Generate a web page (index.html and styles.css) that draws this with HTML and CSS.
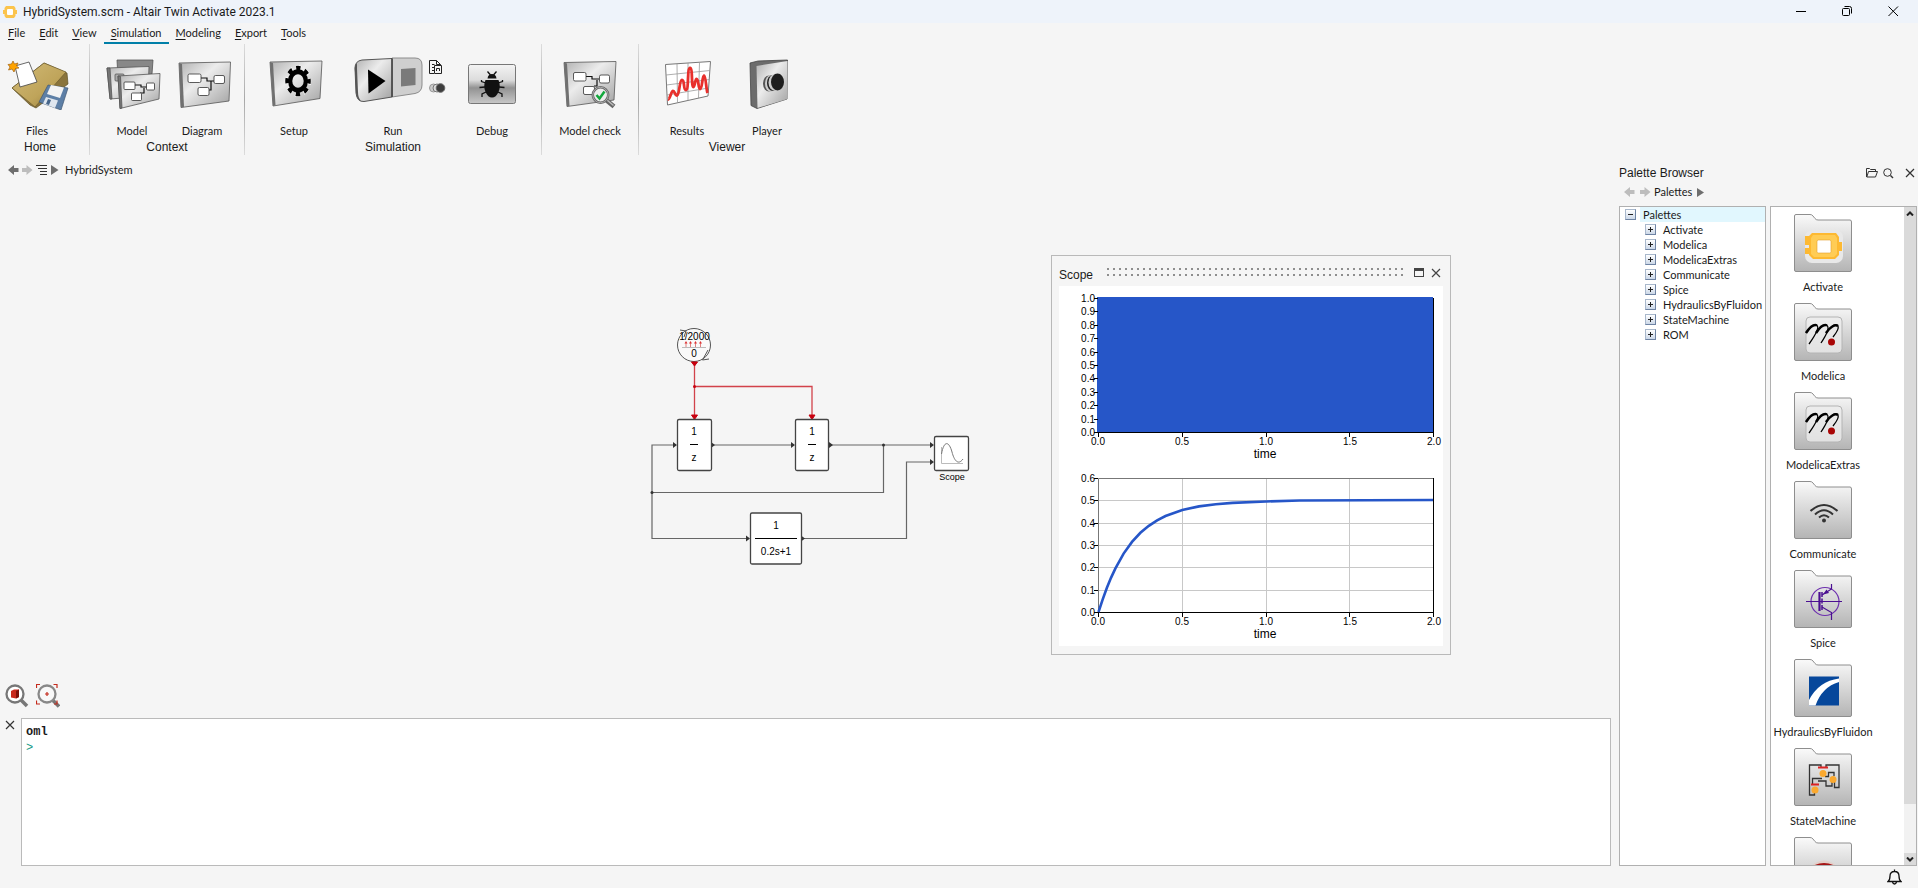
FILE: index.html
```html
<!DOCTYPE html>
<html lang="en">
<head>
    <meta charset="UTF-8">
    <meta name="viewport" content="width=device-width, initial-scale=1.0">
    <title>HybridSystem.scm - Altair Twin Activate 2023.1</title>
    <link rel="stylesheet" href="styles.css">
</head>
<body>
    <!-- shared gradients and shapes -->
    <svg class="defs" width="0" height="0" aria-hidden="true">
        <defs>
            <linearGradient id="metal" x1="0" y1="0" x2="1" y2="1">
                <stop offset="0" stop-color="#b0b0b0"/>
                <stop offset="0.4" stop-color="#ececec"/>
                <stop offset="1" stop-color="#a0a0a0"/>
            </linearGradient>
            <linearGradient id="metal-down" x1="0" y1="0" x2="0" y2="1">
                <stop offset="0" stop-color="#f4f4f4"/>
                <stop offset="0.4" stop-color="#dcdcdc"/>
                <stop offset="0.6" stop-color="#929292"/>
                <stop offset="1" stop-color="#c8c8c8"/>
            </linearGradient>
            <linearGradient id="folder-fill" x1="0" y1="0" x2="0" y2="1">
                <stop offset="0" stop-color="#fafafa"/>
                <stop offset="1" stop-color="#b4b4b4"/>
            </linearGradient>
            <linearGradient id="gold" x1="0" y1="0" x2="1" y2="1">
                <stop offset="0" stop-color="#d2bb78"/>
                <stop offset="0.6" stop-color="#bfa45a"/>
                <stop offset="1" stop-color="#8c7638"/>
            </linearGradient>
            <symbol id="folder" viewBox="0 0 58 58">
                <path d="M.5 56V2Q.5 .5 2 .5H16Q18 .5 19 2L21 4.500Q22 6 24 6H56Q57.500 6 57.500 8V56Q57.500 57.500 56 57.500H2Q.5 57.500 .5 56Z" fill="url(#folder-fill)" stroke="#8e8e8e"/>
            </symbol>
            <symbol id="modelica" viewBox="0 0 58 58">
                <rect x="12" y="14" width="36" height="36" rx="4" fill="#eee" fill-opacity=".75" stroke="#b4b4b4"/>
                <path d="M12 30C16 24 20 21 23 22.500C26 25 20 34 15 41M22 30C26 24 30 21 33 22.500C36 25 31 34 27 40M32 30C36 24 40 21 43 22C46 24 43 29 39 34" fill="none" stroke="#000" stroke-width="1.300"/>
                <path d="M12 30C16 24 20 21 23 22.500M22 30C26 24 30 21 33 22.500M32 30C36 24 41 21 44 23" fill="none" stroke="#000" stroke-width="2.500"/>
                <circle cx="37.500" cy="39" r="3.500" fill="#a80505"/>
            </symbol>
        </defs>
    </svg>

    <header class="titlebar">
        <svg width="14" height="14" viewBox="0 0 14 14" aria-hidden="true">
            <path d="M3 1H11L12.500 3V5H14V9H12.500V11L11 13H3L1.500 11V9H0V5H1.500V3Z" fill="#fbc44d"/>
            <rect x="4" y="4" width="6" height="6" rx="1" fill="#fff"/>
        </svg>
        <span class="titlebar-text">HybridSystem.scm - Altair Twin Activate 2023.1</span>
        <button class="window-btn" aria-label="Minimize"><svg width="11" height="11" viewBox="0 0 11 11"><path d="M0 5.500H10" stroke="#000"/></svg></button>
        <button class="window-btn" aria-label="Restore"><svg width="11" height="11" viewBox="0 0 11 11" fill="none" stroke="#000"><rect x=".5" y="2.500" width="7" height="7" rx="1"/><path d="M2.500 .5H7.500Q9.500 .5 9.500 2.500V7.500"/></svg></button>
        <button class="window-btn" aria-label="Close"><svg width="11" height="11" viewBox="0 0 11 11"><path d="M.5 .5L10 10M10 .5L.5 10" stroke="#000"/></svg></button>
    </header>

    <nav class="menu">
        <a href="#"><u>F</u>ile</a>
        <a href="#"><u>E</u>dit</a>
        <a href="#"><u>V</u>iew</a>
        <a href="#" class="active"><u>S</u>imulation</a>
        <a href="#"><u>M</u>odeling</a>
        <a href="#"><u>E</u>xport</a>
        <a href="#"><u>T</u>ools</a>
    </nav>

    <div class="ribbon">
        <section class="group group-home">
            <div class="tools">
                <button class="tool">
                    <svg width="74" height="56" viewBox="0 0 74 56">
                        <path d="M44 9L67 19L68 30L52 42L36 54L30 51L12 34Z" fill="#8a743c" stroke="#5f5128" stroke-width=".7"/>
                        <path d="M44 9L66 18L35 53L12 34Z" fill="url(#gold)" stroke="#6d5c2c" stroke-width=".7"/>
                        <path d="M48 31L68 34L61 56L39 48Z" fill="#5d7fa6" stroke="#3f5873" stroke-width=".7"/>
                        <path d="M51 31L64 33.500L60 44L47 40Z" fill="#f3f3f3"/>
                        <path d="M46 43L58 46.500L55 54L43 49.500Z" fill="#dfe6ee"/>
                        <path d="M48 45L51 46L49 51L46 50Z" fill="#46658a"/>
                        <path d="M15 12L29 8L37 28L20 33Z" fill="#fff" stroke="#444" stroke-width=".8"/>
                        <path d="M13 7L14.500 10L18 9L16.500 12L19 14L15.500 14.500L14 18L12 15L8.500 16L10 13L8 10.500L11.500 10Z" fill="#ffa300" stroke="#a06010" stroke-width=".7"/>
                    </svg>
                    <span>Files</span>
                </button>
            </div>
            <h2>Home</h2>
        </section>

        <section class="group group-context">
            <div class="tools">
                <button class="tool">
                    <svg width="64" height="56" viewBox="0 0 64 56">
                        <g stroke="#555" stroke-width=".8">
                            <path d="M17 6H53L52 20L18 24Z" fill="#888"/>
                            <path d="M7 14L49 12.500L48 42L10 45Z" fill="url(#metal)"/>
                            <path d="M7 14L10 14L12 45H10Z" fill="#777"/>
                            <rect x="15" y="20" width="9" height="7" rx="1" fill="#aaa"/>
                            <path d="M18 22L60 19.500L59 45L20 54.500Z" fill="url(#metal)"/>
                            <path d="M18 22L20.500 22.500L22 54L20 54.500Z" fill="#777"/>
                        </g>
                        <path d="M34 31H41V33H47M44 34V39H40" fill="none" stroke="#111" stroke-width="1.200"/>
                        <g fill="#fff" stroke="#333" stroke-width=".8">
                            <rect x="24" y="28" width="11" height="7.500" rx="1"/>
                            <rect x="46.500" y="29" width="8" height="7" rx="1"/>
                            <rect x="31.500" y="39" width="10" height="7.500" rx="1"/>
                        </g>
                    </svg>
                    <span>Model</span>
                </button>
                <button class="tool">
                    <svg width="64" height="56" viewBox="0 0 64 56">
                        <path d="M9 9L60.500 8L59 47L11 53.500Z" fill="url(#metal)" stroke="#555" stroke-width=".8"/>
                        <path d="M9 9L12 10L14 53L11 53.500Z" fill="#707070"/>
                        <path d="M30 24H37V27H44M41 27V36H38" fill="none" stroke="#111" stroke-width="1.200"/>
                        <g fill="#fff" stroke="#333" stroke-width=".8">
                            <rect x="18" y="20" width="13" height="8.500" rx="1.500"/>
                            <rect x="44" y="21.500" width="10.500" height="8" rx="1.500"/>
                            <rect x="28" y="33.500" width="11" height="8" rx="1.500"/>
                        </g>
                    </svg>
                    <span>Diagram</span>
                </button>
            </div>
            <h2>Context</h2>
        </section>

        <section class="group group-simulation">
            <div class="tools">
                <button class="tool">
                    <svg width="64" height="56" viewBox="0 0 64 56">
                        <path d="M8 8L60 7L58 44.500L11 52Z" fill="url(#metal)" stroke="#555" stroke-width=".8"/>
                        <path d="M8 8L11 9L13.500 51.500L11 52Z" fill="#707070"/>
                        <g transform="translate(36 27) scale(.84 1)" fill="none">
                            <circle r="13.200" stroke="#fff" stroke-width="5" stroke-dasharray="5.400 4.967" stroke-dashoffset="2"/>
                            <circle r="12.700" stroke="#000" stroke-width="5" stroke-dasharray="5 4.974" stroke-dashoffset="2.500"/>
                            <circle r="9.300" stroke="#000" stroke-width="5"/>
                        </g>
                    </svg>
                    <span>Setup</span>
                </button>
                <div class="tool tool-run">
                    <div class="run-row">
                        <button class="plain-btn" aria-label="Run simulation">
                            <svg width="72" height="56" viewBox="0 0 72 56">
                                <path d="M39 4H62Q69 4 69 11V31Q69 38 62 39.500L39 43Z" fill="#cfcfcf" stroke="#8c8c8c"/>
                                <path d="M39 4.500L9 6Q2 7 2 14L3 39Q4 48 11 47.500L39 43Z" fill="url(#metal)" stroke="#555"/>
                                <path d="M4 9Q1 12 2 18L3 39Q4 46 8 47Q5 44 5 38L4 15Z" fill="#555"/>
                                <path d="M39 4.500V43" stroke="#444" stroke-width="1.500"/>
                                <path d="M15 15.500L32.500 27L15.500 39.500Z" fill="#000"/>
                                <path d="M48 15L62.500 14V31L48 32.500Z" fill="#7a7a7a"/>
                            </svg>
                        </button>
                        <div class="run-side">
                            <button class="plain-btn" aria-label="Batch run">
                                <svg width="14" height="15" viewBox="0 0 14 15" fill="none" stroke="#222"><path d="M5 13.500H.5V.5H7.500L11.500 4.500V5M7.500 .5V4.500H11.500M3 4.500H5.500M3 7.500H5M3 10.500H5"/><path d="M5.500 5.500H12.500V13.500H5.500Z"/><path d="M7.500 11V8.500H10.500V11"/></svg>
                            </button>
                            <button class="plain-btn" aria-label="Record">
                                <svg width="17" height="10" viewBox="0 0 17 10"><circle cx="4.500" cy="5" r="4" fill="#ccc" stroke="#999"/><circle cx="8" cy="5" r="4" fill="#ddd" stroke="#777"/><circle cx="11.500" cy="5" r="4.300" fill="#3d3d3d" stroke="#666"/></svg>
                            </button>
                        </div>
                    </div>
                    <span>Run</span>
                </div>
                <button class="tool">
                    <svg width="64" height="56" viewBox="0 0 64 56">
                        <rect x="8.500" y="10.500" width="47" height="39" rx="2" fill="url(#metal-down)" stroke="#777"/>
                        <g fill="none" stroke="#111" stroke-width="1.300">
                            <path d="M30.500 21L27.500 17.500M33.500 21L36.500 17.500M26 29L21.500 27.500V26M25 33L19.500 33.500M26 38L22 40V43M38 29L42.500 27.500V26M39 33L44.500 33.500M38 38L42 40V43"/>
                        </g>
                        <path d="M27.500 24.500Q28 20 32 20Q36 20 36.500 24.500Z" fill="#111"/>
                        <path d="M25.500 26H38.500Q41 32 38.500 38Q36 43.500 32 43.500Q28 43.500 25.500 38Q23 32 25.500 26Z" fill="#111"/>
                    </svg>
                    <span>Debug</span>
                </button>
            </div>
            <h2>Simulation</h2>
        </section>

        <section class="group group-check">
            <div class="tools">
                <button class="tool">
                    <svg width="64" height="56" viewBox="0 0 64 56">
                        <path d="M6 8.500L58 7.500L56 46L9 52.500Z" fill="url(#metal)" stroke="#555" stroke-width=".8"/>
                        <path d="M6 8.500L9 9.500L11.500 52L9 52.500Z" fill="#707070"/>
                        <path d="M28 22.500H34V25H41M39 26V32H36" fill="none" stroke="#111" stroke-width="1.200"/>
                        <g fill="#fff" stroke="#333" stroke-width=".8">
                            <rect x="15.500" y="18.500" width="12.500" height="8.500" rx="1.500"/>
                            <rect x="41.500" y="21" width="10" height="8" rx="1.500"/>
                            <rect x="25.500" y="32.500" width="11" height="8" rx="1.500"/>
                        </g>
                        <path d="M48 46L56 52.500" stroke="#666" stroke-width="4.500"/>
                        <path d="M49 46L55.500 51.500" stroke="#bbb" stroke-width="1.500"/>
                        <circle cx="42.500" cy="41" r="7.700" fill="#ececec" stroke="#666" stroke-width="2.500"/>
                        <circle cx="42.500" cy="41" r="7.700" fill="none" stroke="#bbb" stroke-width=".8"/>
                        <path d="M38.500 41L41.500 44.500L46.500 37.500" fill="none" stroke="#12a83c" stroke-width="2.500"/>
                    </svg>
                    <span>Model check</span>
                </button>
            </div>
        </section>

        <section class="group group-viewer">
            <div class="tools">
                <button class="tool">
                    <svg width="64" height="56" viewBox="0 0 64 56">
                        <path d="M10.500 10.500L55.500 7.500L53 42L12.500 51Z" fill="#fff" stroke="#777"/>
                        <path d="M11 21L55 16.500M11.500 31L54.500 25.500M12 41L53.500 34M22 10L22.500 49M33 9L33 46.500M44.500 8.500L43.500 44" stroke="#999" stroke-width=".8"/>
                        <path d="M13 45.500C15 46 16 37 18 37C20 37 20 42 22 41.500C25 40 24 26 27 26C30 26 28 36 31 36C34 36 32 14 35 14C38 14 36 33 38.500 33C40 33 40 25 41.500 25C44 25 43 35 45 35C47.500 35 47 22 49 21.500C51 22 51 35 52.500 39" fill="none" stroke="#e8302c" stroke-width="2.800"/>
                    </svg>
                    <span>Results</span>
                </button>
                <button class="tool">
                    <svg width="64" height="56" viewBox="0 0 64 56">
                        <path d="M15 9L23 7L52.500 6L52 45L22 54.500L16 51.500Z" fill="#6c6c6c" stroke="#444" stroke-width=".8"/>
                        <path d="M21.500 12L52.500 7V45L22.500 54Z" fill="url(#metal)"/>
                        <ellipse cx="34" cy="29.500" rx="6" ry="8" fill="#555"/>
                        <ellipse cx="36" cy="29.500" rx="6" ry="8.500" fill="#ccc"/>
                        <ellipse cx="38" cy="29" rx="6" ry="8" fill="#222"/>
                        <ellipse cx="40" cy="28.500" rx="6.500" ry="8.500" fill="#ccc"/>
                        <ellipse cx="42.500" cy="28" rx="6.500" ry="8.500" fill="#1e1e1e"/>
                    </svg>
                    <span>Player</span>
                </button>
            </div>
            <h2>Viewer</h2>
        </section>
    </div>

    <main class="workspace">
        <div class="editor">
            <div class="breadcrumb">
                <button class="plain-btn" aria-label="Back"><svg width="11" height="10" viewBox="0 0 11 10"><path d="M0 5L6 0V3H10.500V7H6V10Z" fill="#6e6e6e"/></svg></button>
                <button class="plain-btn" aria-label="Forward"><svg width="11" height="10" viewBox="0 0 11 10"><path d="M10.500 5L4.500 0V3H0V7H4.500V10Z" fill="#bdbdbd"/></svg></button>
                <button class="plain-btn" aria-label="Outline"><svg width="12" height="11" viewBox="0 0 12 11"><path d="M0 .5H11M2 3.500H11M4 6.500H11M4 9.500H11" stroke="#333" stroke-width="1.200"/></svg></button>
                <svg width="8" height="10" viewBox="0 0 8 10" aria-hidden="true"><path d="M0 0L7.500 5L0 10Z" fill="#6e6e6e"/></svg>
                <a href="#">HybridSystem</a>
            </div>

            <div class="canvas">
                <svg class="diagram" width="340" height="270" viewBox="0 0 340 270">
                    <!-- event clock -->
                    <circle cx="54" cy="35" r="16.500" fill="#fafafa" stroke="#555"/>
                    <path d="M40 20L46 21L44 27M68 40L62.500 50L69 49" fill="none" stroke="#555"/>
                    <path d="M42 37.500H66" stroke="#bbb"/>
                    <path d="M46 37V33M50.500 37V33M55.500 37V33M60.500 37V33" stroke="#e08080"/>
                    <path d="M44.500 33.500L46 31L47.500 33.500ZM49 33.500L50.500 31L52 33.500ZM54 33.500L55.500 31L57 33.500ZM59 33.500L60.500 31L62 33.500Z" fill="#d33"/>
                    <text x="54.500" y="30">1/2000</text>
                    <text x="54" y="47">0</text>

                    <!-- event links -->
                    <path d="M54.500 53V106M54.500 76.500H172V106" fill="none" stroke="#d2424a" stroke-width="1.300"/>
                    <path d="M51.500 52H57.500L54.500 56ZM51.500 105H57.500L54.500 109.500ZM169 105H175L172 109.500Z" fill="#c8000f" stroke="#c8000f"/>
                    <circle cx="54.500" cy="76.500" r="1.500" fill="#c8000f"/>

                    <!-- signal links -->
                    <g fill="none" stroke="#666" stroke-width="1.200">
                        <path d="M36 135H12V228.500H108"/>
                        <path d="M72 135H153"/>
                        <path d="M190 135H292"/>
                        <path d="M243.500 135V182.500H12"/>
                        <path d="M162 228.500H266.500V152H292"/>
                    </g>
                    <g fill="#333">
                        <path d="M33 132V138L37 135ZM151 132V138L155 135ZM290 132V138L294 135ZM290 149V155L294 152ZM106 225.500V231.500L110 228.500Z"/>
                        <path d="M71 132L75 135L71 138ZM189 132L193 135L189 138ZM161 225.500L165 228.500L161 231.500Z"/>
                        <circle cx="12" cy="182.500" r="1.500"/>
                        <circle cx="243.500" cy="135" r="1.500"/>
                    </g>

                    <!-- blocks -->
                    <g fill="#fff" stroke="#444" stroke-width="1.300">
                        <rect x="37.500" y="109.500" width="34" height="51" rx="1.500"/>
                        <rect x="155.500" y="109.500" width="33" height="51" rx="1.500"/>
                        <rect x="110.500" y="203" width="51" height="51" rx="1.500"/>
                        <rect x="294.500" y="126.500" width="34" height="34" rx="1.500"/>
                    </g>
                    <path d="M50 134.500H58M168 134.500H176M115 228.500H157" stroke="#000"/>
                    <text x="54" y="125">1</text>
                    <text x="54" y="151">z</text>
                    <text x="172" y="125">1</text>
                    <text x="172" y="151">z</text>
                    <text x="136" y="219">1</text>
                    <text x="136" y="245">0.2s+1</text>
                    <path d="M301.500 137V153.500H323" fill="none" stroke="#bbb"/>
                    <path d="M301.500 144C304 130 309 131 312 142C314 150 318 156 323 149" fill="none" stroke="#777"/>
                    <text x="312" y="170" class="block-name">Scope</text>
                </svg>

                <section class="scope">
                    <header class="scope-header">
                        <h3>Scope</h3>
                        <div class="grip"></div>
                        <button class="plain-btn" aria-label="Maximize scope"><svg width="10" height="10" viewBox="0 0 10 10"><rect x=".5" y=".5" width="9" height="8" fill="none" stroke="#444"/><path d="M0 1.500H10" stroke="#444" stroke-width="3"/></svg></button>
                        <button class="plain-btn" aria-label="Close scope"><svg width="10" height="10" viewBox="0 0 10 10"><path d="M1 1L9 9M9 1L1 9" stroke="#444" stroke-width="1.200"/></svg></button>
                    </header>
                    <svg class="plots" width="384" height="360" viewBox="0 0 384 360">
                        <!-- upper plot -->
                        <path d="M374.500 12V147" stroke="#000"/>
                        <rect x="38" y="11" width="336" height="135" fill="#2656c8"/>
                        <path d="M35 146.500H375M39.500 146V151M123.500 146V151M207.500 146V151M290.500 146V151M374.500 146V151M35 12.500H39M35 25.500H39M35 39.500H39M35 52.500H39M35 66.500H39M35 79.500H39M35 92.500H39M35 106.500H39M35 119.500H39M35 133.500H39" stroke="#000"/>
                        <g class="ticks-y">
                            <text x="36" y="16">1.0</text>
                            <text x="36" y="29">0.9</text>
                            <text x="36" y="43">0.8</text>
                            <text x="36" y="56">0.7</text>
                            <text x="36" y="70">0.6</text>
                            <text x="36" y="83">0.5</text>
                            <text x="36" y="96">0.4</text>
                            <text x="36" y="110">0.3</text>
                            <text x="36" y="123">0.2</text>
                            <text x="36" y="137">0.1</text>
                            <text x="36" y="150">0.0</text>
                        </g>
                        <g class="ticks-x">
                            <text x="39" y="159">0.0</text>
                            <text x="123" y="159">0.5</text>
                            <text x="207" y="159">1.0</text>
                            <text x="291" y="159">1.5</text>
                            <text x="375" y="159">2.0</text>
                        </g>
                        <text x="206" y="172" class="axis-name">time</text>

                        <!-- lower plot -->
                        <path d="M123.500 193V326M207.500 193V326M290.500 193V326M40 214.500H374M40 237.500H374M40 259.500H374M40 281.500H374M40 304.500H374" stroke="#c8c8c8"/>
                        <path d="M39.500 326V192.500H374" fill="none" stroke="#777"/>
                        <path d="M374.500 192V327M35 326.500H375M39.500 326V331M123.500 326V331M207.500 326V331M290.500 326V331M374.500 326V331M35 192.500H39M35 214.500H39M35 237.500H39M35 259.500H39M35 281.500H39M35 304.500H39" stroke="#000"/>
                        <polyline points="39.5,326 43.7,313.4 47.9,301.8 52.1,291.6 56.3,282.6 64.6,267.6 73,255.9 81.4,246.8 89.8,239.8 98.1,234.3 106.5,230 123.3,224 140,220.4 156.8,218.2 173.5,216.9 207,215.5 240.5,214.5 374,214" fill="none" stroke="#2656c8" stroke-width="2.600"/>
                        <g class="ticks-y">
                            <text x="36" y="196">0.6</text>
                            <text x="36" y="218">0.5</text>
                            <text x="36" y="241">0.4</text>
                            <text x="36" y="263">0.3</text>
                            <text x="36" y="285">0.2</text>
                            <text x="36" y="308">0.1</text>
                            <text x="36" y="330">0.0</text>
                        </g>
                        <g class="ticks-x">
                            <text x="39" y="339">0.0</text>
                            <text x="123" y="339">0.5</text>
                            <text x="207" y="339">1.0</text>
                            <text x="291" y="339">1.5</text>
                            <text x="375" y="339">2.0</text>
                        </g>
                        <text x="206" y="352" class="axis-name">time</text>
                    </svg>
                </section>
            </div>

            <div class="zoom-tools">
                <button class="plain-btn" aria-label="Zoom to object">
                    <svg width="24" height="24" viewBox="0 0 24 24"><path d="M16 16L22 22" stroke="#777" stroke-width="3.500"/><circle cx="10" cy="10" r="8.500" fill="#fff" stroke="#777" stroke-width="2.300"/><path d="M6 7L9 5.500H14V13L11 14.500L6 13.500Z" fill="#c8291c"/><path d="M11 7L14 5.500V13L11 14.500Z" fill="#7c0f08"/></svg>
                </button>
                <button class="plain-btn" aria-label="Zoom to fit">
                    <svg width="24" height="24" viewBox="0 0 24 24"><path d="M16.500 16L23 22.500" stroke="#777" stroke-width="3.500"/><circle cx="11" cy="10" r="8.500" fill="#f8f8f8" stroke="#888" stroke-width="2.300"/><path d="M.5 4V.5H4M17.500 .5H21V4M.5 16.500V20H4M21 16.500V20H18M9 10H13M11 8V12" fill="none" stroke="#c42a1c" stroke-width="1.200"/></svg>
                </button>
            </div>

            <div class="console">
                <button class="plain-btn console-close" aria-label="Close console"><svg width="10" height="10" viewBox="0 0 10 10"><path d="M1 1L9 9M9 1L1 9" stroke="#333" stroke-width="1.200"/></svg></button>
                <div class="console-box">
                    <div class="console-lang">oml</div>
                    <div class="console-prompt">&gt;</div>
                </div>
            </div>
        </div>

        <aside class="palette">
            <header class="palette-header">
                <h3>Palette Browser</h3>
                <button class="plain-btn" aria-label="Open folder"><svg width="12" height="10" viewBox="0 0 12 10" fill="none" stroke="#333"><path d="M.5 9V.5H3.500L4.500 1.500H9.500V3.500M.8 9L2.500 3.500H11.500L9.500 9Z"/></svg></button>
                <button class="plain-btn" aria-label="Search"><svg width="11" height="11" viewBox="0 0 11 11" fill="none" stroke="#333"><circle cx="4.500" cy="4.500" r="3.800"/><path d="M7.500 7.500L10 10" stroke-width="1.400"/></svg></button>
                <button class="plain-btn palette-close" aria-label="Close palette"><svg width="10" height="10" viewBox="0 0 10 10"><path d="M1 1L9 9M9 1L1 9" stroke="#333" stroke-width="1.200"/></svg></button>
            </header>
            <div class="palette-nav">
                <button class="plain-btn" aria-label="Back"><svg width="11" height="10" viewBox="0 0 11 10"><path d="M0 5L6 0V3H10.500V7H6V10Z" fill="#bdbdbd"/></svg></button>
                <button class="plain-btn" aria-label="Forward"><svg width="11" height="10" viewBox="0 0 11 10"><path d="M10.500 5L4.500 0V3H0V7H4.500V10Z" fill="#bdbdbd"/></svg></button>
                <a href="#">Palettes</a>
                <svg width="7" height="9" viewBox="0 0 7 9" aria-hidden="true"><path d="M0 0L7 4.500L0 9Z" fill="#6e6e6e"/></svg>
            </div>

            <div class="palette-body">
                <ul class="tree">
                    <li class="root"><button class="toggle minus" aria-label="Collapse"></button><span>Palettes</span></li>
                    <li><button class="toggle" aria-label="Expand"></button><span>Activate</span></li>
                    <li><button class="toggle" aria-label="Expand"></button><span>Modelica</span></li>
                    <li><button class="toggle" aria-label="Expand"></button><span>ModelicaExtras</span></li>
                    <li><button class="toggle" aria-label="Expand"></button><span>Communicate</span></li>
                    <li><button class="toggle" aria-label="Expand"></button><span>Spice</span></li>
                    <li><button class="toggle" aria-label="Expand"></button><span>HydraulicsByFluidon</span></li>
                    <li><button class="toggle" aria-label="Expand"></button><span>StateMachine</span></li>
                    <li><button class="toggle" aria-label="Expand"></button><span>ROM</span></li>
                </ul>

                <div class="library">
                    <div class="library-items">
                        <button class="item">
                            <svg width="58" height="58" viewBox="0 0 58 58">
                                <use href="#folder"/>
                                <rect x="11" y="16" width="38" height="33" rx="7" fill="#e8e8e8"/>
                                <path d="M18 19H42L45 23V28H48V37H45V41L41 45H19L15 41V40H11V34H15V31H11V22H15Z" fill="#fdb932"/>
                                <path d="M19 21H41L43 24V40L40 43H20L17 40V24Z" fill="#ffcc55"/>
                                <rect x="23" y="26" width="14" height="13" rx="1.500" fill="#fff" stroke="#e3a02d" stroke-width=".6"/>
                            </svg>
                            <span>Activate</span>
                        </button>
                        <button class="item">
                            <svg width="58" height="58" viewBox="0 0 58 58"><use href="#folder"/><use href="#modelica"/></svg>
                            <span>Modelica</span>
                        </button>
                        <button class="item">
                            <svg width="58" height="58" viewBox="0 0 58 58"><use href="#folder"/><use href="#modelica"/></svg>
                            <span>ModelicaExtras</span>
                        </button>
                        <button class="item">
                            <svg width="58" height="58" viewBox="0 0 58 58">
                                <use href="#folder"/>
                                <g fill="none" stroke="#333" stroke-width="2">
                                    <path d="M16.500 30Q30 18 43.500 30"/>
                                    <path d="M21 33.500Q30 25 39 33.500"/>
                                    <path d="M25 36.500Q30 32 35 36.500"/>
                                </g>
                                <circle cx="30" cy="39.500" r="2" fill="#333"/>
                            </svg>
                            <span>Communicate</span>
                        </button>
                        <button class="item">
                            <svg width="58" height="58" viewBox="0 0 58 58">
                                <use href="#folder"/>
                                <g fill="none" stroke="#4b0f91" stroke-width="1.200">
                                    <circle cx="31" cy="31.500" r="14" stroke="#6d2fae"/>
                                    <path d="M12 31.500H48M37.500 14V19L28 25M28 37L37.500 42.500V50"/>
                                    <path d="M25.500 22V41" stroke-width="2.200"/>
                                    <path d="M28 22V41" stroke-width="1.500" stroke-dasharray="5 1.500"/>
                                </g>
                                <path d="M29 24.500L32.500 19.500L35 23Z" fill="#4b0f91"/>
                            </svg>
                            <span>Spice</span>
                        </button>
                        <button class="item">
                            <svg width="58" height="58" viewBox="0 0 58 58">
                                <use href="#folder"/>
                                <rect x="15" y="17.500" width="30" height="29" fill="#06479b"/>
                                <path d="M15 46.500V41Q25 22 45 19.500V23Q28 28 21.500 46.500Z" fill="#fff"/>
                            </svg>
                            <span>HydraulicsByFluidon</span>
                        </button>
                        <button class="item">
                            <svg width="58" height="58" viewBox="0 0 58 58">
                                <use href="#folder"/>
                                <path d="M27 19V17H15.500V47H20.500V44M32 19V17H45V39.500H40.500V34M18.500 36V30.500H28M31 28.500H34.500V24.500H40V28M24 33H32V38H38V33" fill="none" stroke="#333" stroke-width="1.300"/>
                                <path d="M24 19.500H34M17 36.500H25" stroke="#d22" stroke-width="2"/>
                                <g fill="#fba92f"><circle cx="29" cy="25.500" r="3.500"/><circle cx="39" cy="31.500" r="3.500"/><circle cx="21" cy="42" r="3.500"/></g>
                            </svg>
                            <span>StateMachine</span>
                        </button>
                        <button class="item" aria-label="ROM">
                            <svg width="58" height="58" viewBox="0 0 58 58">
                                <use href="#folder"/>
                                <path d="M16 30Q30 17 44 30Z" fill="#e3cfc9"/>
                                <ellipse cx="30" cy="32" rx="12" ry="6" fill="#a51414"/>
                            </svg>
                        </button>
                    </div>
                    <div class="scrollbar">
                        <button class="scroll-btn" aria-label="Scroll up"><svg width="8" height="5" viewBox="0 0 8 5"><path d="M1 4.500L4 1.500L7 4.500" fill="none" stroke="#222" stroke-width="2"/></svg></button>
                        <div class="thumb"></div>
                        <div class="track"></div>
                        <button class="scroll-btn" aria-label="Scroll down"><svg width="8" height="5" viewBox="0 0 8 5"><path d="M1 .5L4 3.500L7 .5" fill="none" stroke="#222" stroke-width="2"/></svg></button>
                    </div>
                </div>
            </div>
        </aside>
    </main>

    <footer class="statusbar">
        <button class="plain-btn" aria-label="Notifications">
            <svg width="15" height="16" viewBox="0 0 15 16" fill="none" stroke="#111" stroke-width="1.300"><path d="M1 12.500Q3 11 3 7Q3 2.500 7.500 2.500Q12 2.500 12 7Q12 11 14 12.500ZM7.500 2.500V.5M5.500 13Q6 15 7.500 15Q9 15 9.500 13"/></svg>
        </button>
    </footer>
</body>
</html>
```

FILE: styles.css
```css
* {
    box-sizing: border-box;
}
body {
    margin: 0;
    height: 100vh;
    display: flex;
    flex-direction: column;
    background-color: #f5f5f5;
    color: #1a1a1a;
    font-family: Lato, "Liberation Sans", sans-serif;
    font-size: 11px;
    line-height: 16px;
    overflow: hidden;
}
a {
    color: inherit;
    text-decoration: none;
}
button {
    padding: 0;
    border: none;
    background: none;
    color: inherit;
    font: inherit;
}
svg {
    display: block;
    flex-shrink: 0;
}
h2, h3 {
    margin: 0;
    font-family: "Liberation Sans", Arial, sans-serif;
    font-size: 12px;
    font-weight: normal;
}
.defs {
    position: absolute;
}
.plain-btn {
    display: flex;
    align-items: center;
    justify-content: center;
}

/* title bar */
.titlebar {
    display: flex;
    align-items: center;
    height: 23px;
    padding: 0 2px 0 3px;
    background-color: #eef3fa;
}
.titlebar-text {
    flex: 1;
    padding-left: 6px;
    font-family: Roboto, "Open Sans", sans-serif;
    font-size: 12px;
}
.window-btn {
    display: flex;
    align-items: center;
    justify-content: center;
    width: 46px;
    height: 20px;
}

/* menu */
.menu {
    display: flex;
    height: 21px;
    padding-left: 1px;
}
.menu a {
    padding: 2px 7px 0;
    border-bottom: 2px solid transparent;
}
.menu u {
    text-underline-offset: 2px;
}
.menu .active {
    border-bottom-color: #007fa8;
}

/* ribbon */
.ribbon {
    display: flex;
    height: 111px;
}
.group {
    display: flex;
    flex-direction: column;
    padding-top: 10px;
    border-right: 1px solid;
    border-image: linear-gradient(#ddd, #a8a8a8, #ddd) 1;
}
.group h2 {
    height: 16px;
    text-align: center;
}
.group-home {
    width: 90px;
    padding-right: 9px;
}
.group-home .tool {
    width: 74px;
}
.group-context {
    width: 155px;
    padding-left: 7px;
    padding-right: 7px;
}
.group-simulation {
    width: 297px;
}
.group-check {
    width: 97px;
}
.group-viewer {
    width: 176px;
    padding: 10px 8px 0;
    border: none;
}
.tools {
    display: flex;
    height: 85px;
}
.tool {
    flex: 1;
    display: flex;
    flex-direction: column;
    align-items: center;
    gap: 13px;
}
.group-home .tool {
    flex: none;
}
.tool-run {
    flex: 0 0 100px;
}
.run-row {
    display: flex;
    align-self: stretch;
    justify-content: flex-end;
    gap: 4px;
    margin: 0 -4px;
}
.run-side {
    display: flex;
    flex-direction: column;
    align-items: flex-start;
    gap: 8px;
    width: 18px;
    padding-top: 6px;
}

/* workspace */
.workspace {
    flex: 1;
    display: flex;
    min-height: 0;
}
.editor {
    flex: 1;
    display: flex;
    flex-direction: column;
    min-width: 0;
}
.breadcrumb {
    display: flex;
    align-items: center;
    gap: 3px;
    height: 30px;
    padding-left: 8px;
}
.breadcrumb a {
    padding-left: 3px;
}
.canvas {
    flex: 1;
    position: relative;
    min-height: 0;
}
.diagram {
    position: absolute;
    left: 640px;
    top: 125px;
}
.diagram text {
    font-family: "Liberation Sans", Arial, sans-serif;
    font-size: 10px;
    text-anchor: middle;
}
.diagram .block-name {
    font-size: 9px;
}

/* scope window */
.scope {
    position: absolute;
    left: 1051px;
    top: 70px;
    padding: 0 7px 8px;
    border: 1px solid #b9b9b9;
    background-color: #f5f5f5;
}
.scope-header {
    display: flex;
    align-items: center;
    gap: 7px;
    height: 30px;
    padding: 4px 2px 0 0;
}
.scope-header h3 {
    margin-right: 7px;
    padding-top: 4px;
}
.grip {
    flex: 1;
    height: 10px;
    background-image: linear-gradient(90deg, #8e8e8e 2px, transparent 2px);
    background-size: 6px 10px;
    -webkit-mask-image: linear-gradient(#000 2px, transparent 2px);
    -webkit-mask-size: 6px 6px;
}
.plots {
    background-color: #fff;
}
.plots text {
    font-family: "Liberation Sans", Arial, sans-serif;
    font-size: 10px;
}
.ticks-y {
    text-anchor: end;
}
.ticks-x {
    text-anchor: middle;
}
.plots .axis-name {
    font-size: 12px;
    text-anchor: middle;
}

/* zoom buttons and console */
.zoom-tools {
    display: flex;
    gap: 7px;
    padding: 0 0 10px 5px;
}
.console {
    display: flex;
    height: 148px;
}
.console-close {
    width: 21px;
    height: 14px;
    padding-right: 2px;
}
.console-box {
    flex: 1;
    padding: 5px 4px;
    border: 1px solid #bababa;
    background-color: #fff;
    font-family: "Liberation Mono", monospace;
    font-size: 12px;
}
.console-lang {
    font-weight: bold;
}
.console-prompt {
    color: #179a86;
}

/* palette browser */
.palette {
    display: flex;
    flex-direction: column;
    width: 307px;
    padding: 9px 1px 0 8px;
}
.palette-header {
    display: flex;
    align-items: center;
    gap: 5px;
    height: 18px;
}
.palette-header h3 {
    flex: 1;
}
.palette-close {
    padding: 0 2px 0 6px;
}
.palette-nav {
    display: flex;
    align-items: center;
    gap: 3px;
    height: 20px;
    margin-bottom: 4px;
    padding-left: 3px;
}
.palette-nav svg:last-child {
    margin-left: 2px;
}
.palette-body {
    flex: 1;
    display: grid;
    grid-template-columns: 1fr 1fr;
    gap: 4px;
    min-height: 0;
}
.tree {
    margin: 0;
    padding: 0;
    border: 1px solid #b0b0b0;
    background-color: #fff;
    list-style: none;
    line-height: 15px;
}
.tree li {
    display: flex;
    align-items: center;
    padding-left: 25px;
    height: 15px;
}
.tree li span {
    flex: 1;
    padding-left: 7px;
}
.tree .root {
    padding-left: 5px;
}
.tree .root span {
    margin-left: 4px;
    padding-left: 3px;
    background-color: #e1f7fe;
}
.toggle {
    width: 11px;
    height: 11px;
    border: 1px solid #a9b8cc;
    border-right-color: #6e83a3;
    border-bottom-color: #6e83a3;
    background:
        linear-gradient(#222, #222) center / 5px 1px no-repeat,
        linear-gradient(#222, #222) center / 1px 5px no-repeat,
        linear-gradient(#fff, #ccd8e8);
}
.toggle.minus {
    background:
        linear-gradient(#222, #222) center / 5px 1px no-repeat,
        linear-gradient(#fff, #ccd8e8);
}
.library {
    display: flex;
    border: 1px solid #b0b0b0;
    background-color: #fff;
    min-height: 0;
    overflow: hidden;
}
.library-items {
    flex: 1;
    display: grid;
    grid-template-columns: repeat(auto-fill, 104px);
    grid-auto-rows: 89px;
    padding-top: 7px;
    overflow: hidden;
}
.item {
    display: flex;
    flex-direction: column;
    align-items: center;
    gap: 7px;
}
.scrollbar {
    display: flex;
    flex-direction: column;
    width: 12px;
    background-color: #f2f2f2;
}
.scroll-btn {
    display: flex;
    align-items: center;
    justify-content: center;
    height: 12px;
    background-color: #dadada;
}
.thumb {
    flex: 12;
    background-color: #dadada;
}
.track {
    flex: 1;
}

/* status bar */
.statusbar {
    display: flex;
    align-items: center;
    justify-content: flex-end;
    height: 22px;
    padding-right: 16px;
}
```
